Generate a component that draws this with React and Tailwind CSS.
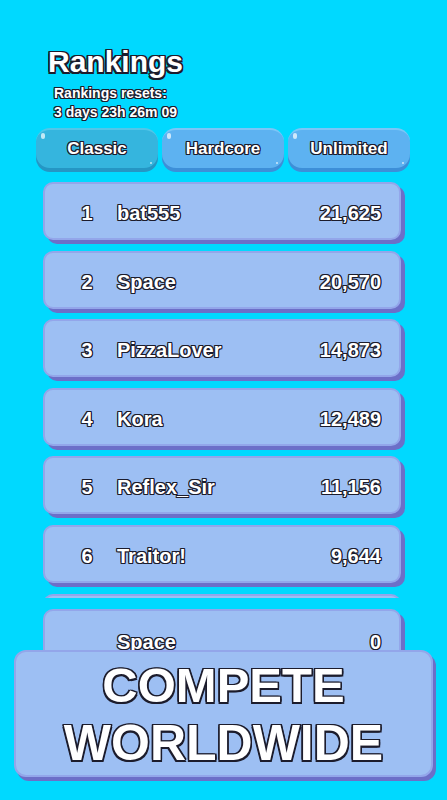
import React from 'react'

const ROWS = [
  { rank: 1, name: 'bat555', score: '21,625' },
  { rank: 2, name: 'Space', score: '20,570' },
  { rank: 3, name: 'PizzaLover', score: '14,873' },
  { rank: 4, name: 'Kora', score: '12,489' },
  { rank: 5, name: 'Reflex_Sir', score: '11,156' },
  { rank: 6, name: 'Traitor!', score: '9,644' },
]

const TABS = ['Classic', 'Hardcore', 'Unlimited']

// white text with a dark outline, like the game font
const outline =
  'text-white [text-shadow:-1px_-1px_0_#1c1c2c,1px_-1px_0_#1c1c2c,-1px_1px_0_#1c1c2c,1px_1px_0_#1c1c2c,0_1px_0_#1c1c2c,1px_0_0_#1c1c2c,-1px_0_0_#1c1c2c,0_-1px_0_#1c1c2c]'
const outlineBig =
  'text-white [text-shadow:-1.5px_-1.5px_0_#1c1c2c,1.5px_-1.5px_0_#1c1c2c,-1.5px_1.5px_0_#1c1c2c,1.5px_1.5px_0_#1c1c2c,0_2px_0_#1c1c2c,1.5px_0_0_#1c1c2c,-1.5px_0_0_#1c1c2c,0_-1.5px_0_#1c1c2c]'

function Row({ rank, name, score }) {
  return (
    <div className="flex h-[58px] w-[358px] shrink-0 items-center rounded-[10px] border-2 border-[#93a6ea] bg-[#9dbff3] pt-[4px] shadow-[4px_4px_0_#6c6fc8]">
      <span className={`ml-[22px] w-[40px] text-center text-[20px] font-bold ${outline}`}>{rank}</span>
      <span className={`ml-[10px] flex-1 text-[20px] font-bold ${outline}`}>{name}</span>
      <span className={`pr-[18px] text-[20px] font-bold ${outline}`}>{score}</span>
    </div>
  )
}

export default function App() {
  return (
    <div className="relative h-[800px] w-full overflow-hidden bg-[#00d9ff] font-['Liberation_Sans',Arial,sans-serif]">
      {/* header */}
      <div className="pl-[48px] pt-[44px]">
        <h1 className={`text-[30px] leading-[36px] font-bold ${outlineBig}`}>Rankings</h1>
        <div className={`mt-[4px] pl-[6px] text-[14px] leading-[19px] font-bold ${outline}`}>
          <p>Rankings resets:</p>
          <p>3 days 23h 26m 09</p>
        </div>
      </div>

      {/* mode tabs */}
      <div className="mt-[6px] flex gap-[4px] pl-[36px]">
        {TABS.map((t, i) => (
          <div
            key={t}
            className={`relative flex h-[40px] w-[122px] items-center justify-center rounded-[14px] border-t-2 ${
              i === 0
                ? 'border-[#52c6e8] bg-[#35b5de] shadow-[0_4px_0_#2596c4]'
                : 'border-[#7cc6f7] bg-[#5db2f1] shadow-[0_4px_0_#3d8fd8]'
            }`}
          >
            <span className="absolute left-[5px] top-[3px] h-[6px] w-[4px] rounded-full bg-white/70" />
            <span className="absolute bottom-[4px] right-[6px] h-[2px] w-[2px] rounded-full bg-white/70" />
            <span className={`text-[17px] font-bold ${outline}`}>{t}</span>
          </div>
        ))}
      </div>

      {/* rankings list */}
      <div className="mt-[14px] ml-[43px] flex flex-col gap-[10.5px]">
        {ROWS.map(r => (
          <Row key={r.rank} {...r} />
        ))}
        <div className="-mt-[4px] h-[9px] overflow-hidden pt-[5px]">
          <div className="h-[20px] w-[358px] rounded-[10px] border-2 border-[#93a6ea] bg-[#9dbff3]" />
        </div>
      </div>

      {/* own rank */}
      <div className="mt-[11px] ml-[43px]">
        <div className="flex h-[66px] w-[358px] items-center rounded-[10px] border-2 border-[#93a6ea] bg-[#9dbff3] shadow-[4px_4px_0_#6c6fc8]">
          <span className="ml-[22px] w-[40px]" />
          <span className={`ml-[10px] flex-1 text-[20px] font-bold ${outline}`}>Space</span>
          <span className={`pr-[18px] text-[20px] font-bold ${outline}`}>0</span>
        </div>
      </div>

      {/* banner over the list */}
      <div className="absolute left-[14px] top-[650px] flex h-[127px] w-[419px] flex-col items-center justify-center rounded-[12px] border-2 border-[#93a6ea] bg-[#9dbff3] shadow-[3px_4px_0_#6c6fc8]">
        <p className={`text-[49px] leading-[58px] font-bold ${outlineBig}`}>COMPETE</p>
        <p className={`text-[50px] leading-[58px] font-bold ${outlineBig}`}>WORLDWIDE</p>
      </div>
    </div>
  )
}
